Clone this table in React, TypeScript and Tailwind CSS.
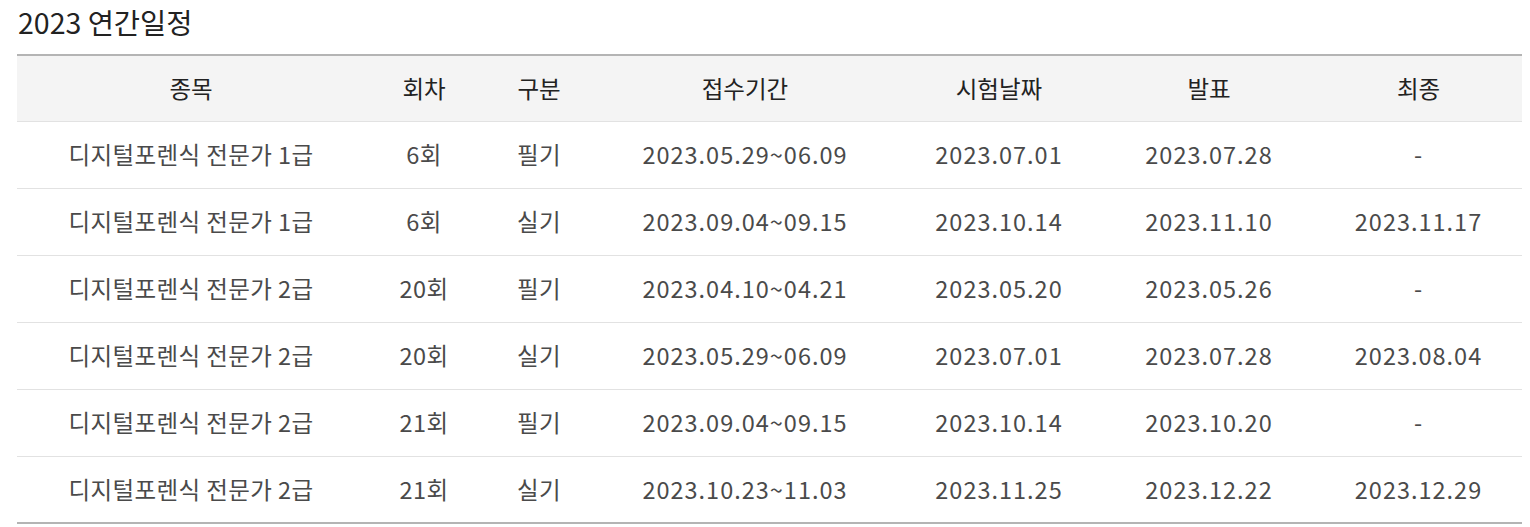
const rows = [
  ['디지털포렌식 전문가 1급', '6회', '필기', '2023.05.29~06.09', '2023.07.01', '2023.07.28', '-'],
  ['디지털포렌식 전문가 1급', '6회', '실기', '2023.09.04~09.15', '2023.10.14', '2023.11.10', '2023.11.17'],
  ['디지털포렌식 전문가 2급', '20회', '필기', '2023.04.10~04.21', '2023.05.20', '2023.05.26', '-'],
  ['디지털포렌식 전문가 2급', '20회', '실기', '2023.05.29~06.09', '2023.07.01', '2023.07.28', '2023.08.04'],
  ['디지털포렌식 전문가 2급', '21회', '필기', '2023.09.04~09.15', '2023.10.14', '2023.10.20', '-'],
  ['디지털포렌식 전문가 2급', '21회', '실기', '2023.10.23~11.03', '2023.11.25', '2023.12.22', '2023.12.29'],
];

const heads = ['종목', '회차', '구분', '접수기간', '시험날짜', '발표', '최종'];
const widths = ['w-[348px]', 'w-[118px]', 'w-[112px]', 'w-[300px]', 'w-[208px]', 'w-[212px]', 'w-[207px]'];

export default function App() {
  return (
    <div className="bg-white pl-[17px] pr-[8px] pt-[4px] font-['Noto_Sans_CJK_KR','Noto_Sans',sans-serif] text-[#333]">
      <h2 className="mb-[14px] ml-[1px] text-[28.5px] leading-[36px] text-[#222]">2023 연간일정</h2>
      <table className="w-[1505px] table-fixed border-collapse border-y-2 border-[#b4b4b4] text-center">
        <colgroup>
          {widths.map((w, i) => (
            <col key={i} className={w} />
          ))}
        </colgroup>
        <thead>
          <tr className="h-[66px] border-b border-[#e2e2e2] bg-[#f4f4f4]">
            {heads.map((h) => (
              <th key={h} className="text-[23.5px] font-normal text-[#222]">
                {h}
              </th>
            ))}
          </tr>
        </thead>
        <tbody>
          {rows.map((r, i) => (
            <tr key={i} className="h-[67px] border-b border-[#e2e2e2] last:border-b-0">
              {r.map((c, j) => (
                <td
                  key={j}
                  className={
                    j >= 3
                      ? 'text-[23.5px] tracking-[1px] text-[#4a4a4a]'
                      : 'text-[23.5px] tracking-[0.4px] text-[#4a4a4a]'
                  }
                >
                  {c}
                </td>
              ))}
            </tr>
          ))}
        </tbody>
      </table>
    </div>
  );
}
